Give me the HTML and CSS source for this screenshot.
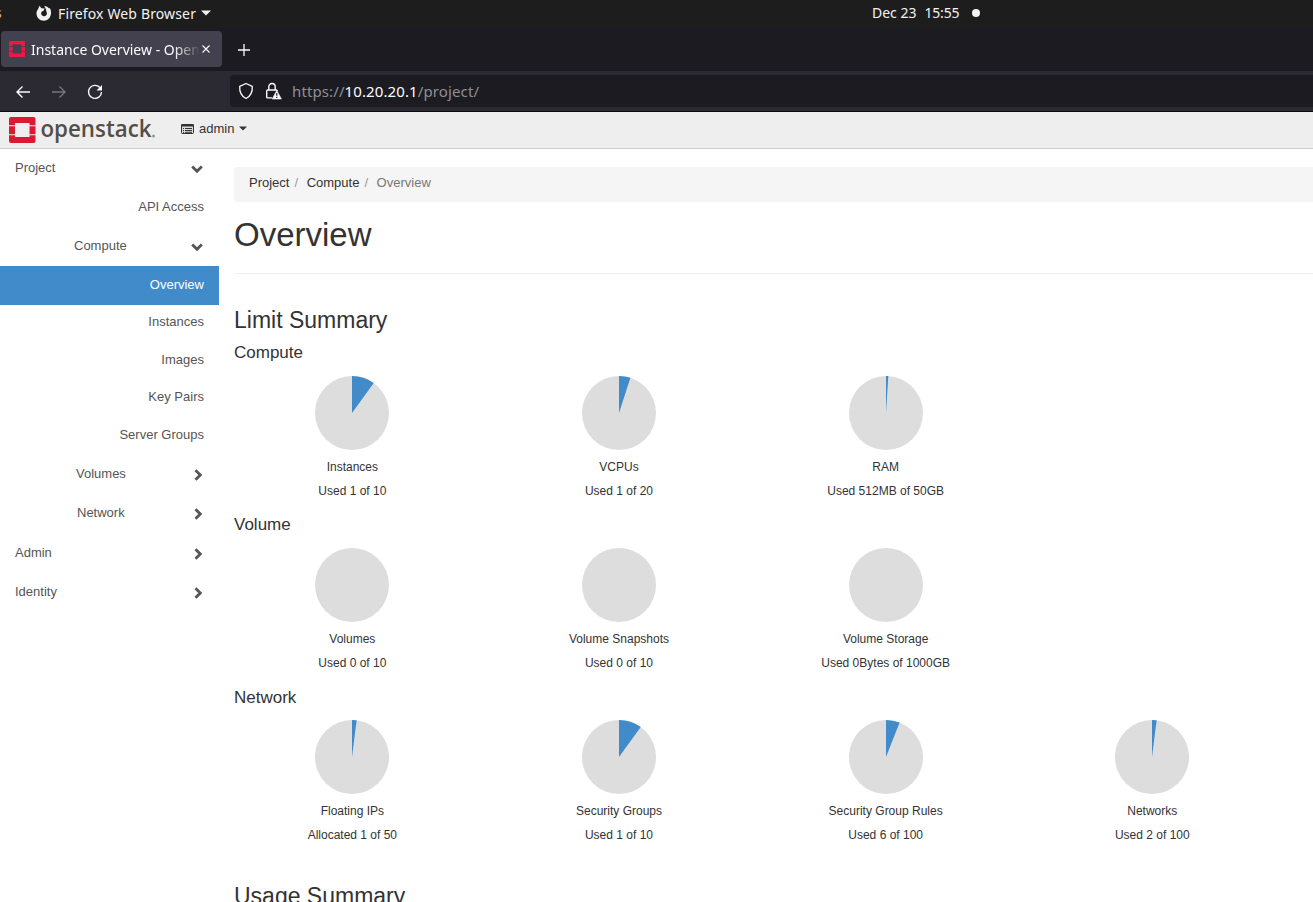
FILE: index.html
```html
<!DOCTYPE html>
<html lang="en">
<head>
<meta charset="utf-8">
<title>Instance Overview - OpenStack Dashboard</title>
<link rel="stylesheet" href="styles.css">
</head>
<body>
<div class="desktop-bar">
  <span class="activities">s</span>
  <div class="app-menu">
    <svg width="16" height="16" viewBox="0 0 16 16"><path d="M3.500.8 5.400 3.200 8.600 3.600 7.400 6 5.900 6.600A2.800 2.800 0 1 0 10.600 7.200L9.800 4 8.300.9C10.300 1 12 1.800 13 3.400L13.900 3C16.800 8.200 14.100 15.800 8 15.800 1.700 15.800-1.600 8.800 2 4.300Z" fill="#f2f2f2"/></svg>
    <span class="app-name">Firefox Web Browser</span>
    <svg class="caret" width="10" height="6" viewBox="0 0 10 6"><path d="M0 .5h10L5 5.500z" fill="#f2f2f2"/></svg>
  </div>
  <div class="clock"><span>Dec 23</span><span class="time">15:55</span><i class="dot"></i></div>
</div>
<div class="tab-strip">
  <div class="tab">
    <svg width="16" height="16" viewBox="0 0 16 16"><path fill="#ed1944" d="M1 0h14Q16 0 16 1V5.200h-3.500V3.500h-9V5.200H0V1Q0 0 1 0ZM0 5.900h3.500v4.200H0Zm12.500 0H16v4.200h-3.500ZM0 10.800h3.500v1.700h9v-1.700H16V15Q16 16 15 16H1Q0 16 0 15Z"/></svg>
    <span class="tab-title">Instance Overview - OpenStack</span>
    <svg class="close" width="8" height="8" viewBox="0 0 8 8"><path d="m.5.500 7 7m0-7-7 7" stroke="#fbfbfe" stroke-width="1.100"/></svg>
  </div>
  <svg class="new-tab" width="12" height="12" viewBox="0 0 12 12"><path d="M6 0v12M0 6h12" stroke="#fbfbfe" stroke-width="1.300"/></svg>
</div>
<div class="toolbar">
  <div class="nav-buttons">
    <svg width="16" height="16" viewBox="0 0 16 16"><path d="M15 8H2m5.500-5.500L2 8l5.500 5.500" fill="none" stroke="#fbfbfe" stroke-width="1.400"/></svg>
    <svg width="16" height="16" viewBox="0 0 16 16"><path d="M1 8h13M8.500 2.500 14 8l-5.500 5.500" fill="none" stroke="#77767e" stroke-width="1.300"/></svg>
    <svg width="16" height="16" viewBox="0 0 16 16"><path d="M12.800 3.500A6.500 6.500 0 1 0 14.500 8" fill="none" stroke="#fbfbfe" stroke-width="1.400"/><path d="M15 1v5.500H9.500Z" fill="#fbfbfe"/></svg>
  </div>
  <div class="url-bar">
    <svg width="16" height="18" viewBox="0 0 16 18"><path d="m8 1.500 6.300 2.800c.3 5-.9 9.600-6.300 12.200C2.600 13.900 1.400 9.300 1.700 4.300Z" fill="none" stroke="#fbfbfe" stroke-width="1.300" stroke-linejoin="round"/></svg>
    <svg class="lock" width="17" height="18" viewBox="0 0 17 18"><path d="M3.800 8V4.700a3.200 3.200 0 0 1 6.400 0V8M7 15.900H2.700Q1.700 15.900 1.700 14.900V9Q1.700 8 2.700 8h8.600q.9 0 .9 1" fill="none" stroke="#fbfbfe" stroke-width="1.400"/><path d="m11.800 8.400 4.600 8.600H7.200Z" fill="#fbfbfe" stroke="#fbfbfe" stroke-width=".6" stroke-linejoin="round"/><path d="M11.800 11v2.800m0 1v1.200" stroke="#1c1b22" stroke-width="1.200"/></svg>
    <span class="url">https://<b>10.20.20.1</b>/project/</span>
  </div>
</div>
<header class="navbar">
  <svg class="brand" width="148" height="36" viewBox="0 -2 148 36">
    <path fill="#da1a32" d="M2 3h22.500Q26.500 3 26.500 5v6.300H20.500V9H6v2.300H0V5Q0 3 2 3ZM0 12.300h6v8H0Zm20.500 0h6v8h-6ZM0 21.300h6V23h14.500v-1.700h6V27q0 2-2 2H2q-2 0-2-2Z"/>
    <text class="wordmark" x="31.500" y="23" textLength="111" lengthAdjust="spacingAndGlyphs">openstack</text>
    <circle cx="144.500" cy="22" r="1.500" fill="#999"/>
  </svg>
  <div class="domain">
    <svg width="13" height="10" viewBox="0 0 13 10"><rect x=".5" y=".5" width="12" height="9" rx=".8" fill="#ddd" stroke="#333"/><path d="M0 1.500h13" stroke="#333" stroke-width="2"/><path d="M2 4.500h1m1 0h7M2 6.500h1m1 0h7M2 8.300h1m1 0h7" stroke="#333" stroke-width="1"/></svg>
    <span>admin</span>
    <svg width="8" height="5" viewBox="0 0 8 5"><path d="M0 .5h8l-4 4z" fill="#333"/></svg>
  </div>
</header>
<div class="page">
  <nav class="sidebar">
    <a class="row top">Project<svg class="down" width="12" height="9" viewBox="0 0 12 9"><path d="m1.200 1.500 4.800 4.800 4.800-4.800" class="chev"/></svg></a>
    <a class="row leaf">API Access</a>
    <a class="row group compute">Compute<svg class="down" width="12" height="9" viewBox="0 0 12 9"><path d="m1.200 1.500 4.800 4.800 4.800-4.800" class="chev"/></svg></a>
    <a class="row leaf active">Overview</a>
    <a class="row leaf h36">Instances</a>
    <a class="row leaf images">Images</a>
    <a class="row leaf h36">Key Pairs</a>
    <a class="row leaf">Server Groups</a>
    <a class="row group volumes">Volumes<svg width="9" height="12" viewBox="0 0 9 12"><path d="M1.500 1.200 6.300 6l-4.800 4.800" class="chev"/></svg></a>
    <a class="row group network">Network<svg width="9" height="12" viewBox="0 0 9 12"><path d="M1.500 1.200 6.300 6l-4.800 4.800" class="chev"/></svg></a>
    <a class="row top admin">Admin<svg width="9" height="12" viewBox="0 0 9 12"><path d="M1.500 1.200 6.300 6l-4.800 4.800" class="chev"/></svg></a>
    <a class="row top identity">Identity<svg width="9" height="12" viewBox="0 0 9 12"><path d="M1.500 1.200 6.300 6l-4.800 4.800" class="chev"/></svg></a>
  </nav>
  <main class="content">
    <div class="breadcrumb"><span>Project</span><i>/</i><span>Compute</span><i>/</i><span class="current">Overview</span></div>
    <h1>Overview</h1>
    <h2>Limit Summary</h2>
    <section class="quota">
      <h3>Compute</h3>
      <div class="charts">
        <div class="chart"><svg class="pie" viewBox="0 0 74 74"><circle cx="37" cy="37" r="37"/><path d="M37 37V0A37 37 0 0 1 58.750 7.070Z"/></svg><p>Instances</p><p>Used 1 of 10</p></div>
        <div class="chart"><svg class="pie" viewBox="0 0 74 74"><circle cx="37" cy="37" r="37"/><path d="M37 37V0A37 37 0 0 1 48.430 1.810Z"/></svg><p>VCPUs</p><p>Used 1 of 20</p></div>
        <div class="chart"><svg class="pie" viewBox="0 0 74 74"><circle cx="37" cy="37" r="37"/><path d="M37 37V0A37 37 0 0 1 39.320 .07Z"/></svg><p>RAM</p><p>Used 512MB of 50GB</p></div>
      </div>
    </section>
    <section class="quota">
      <h3>Volume</h3>
      <div class="charts">
        <div class="chart"><svg class="pie" viewBox="0 0 74 74"><circle cx="37" cy="37" r="37"/></svg><p>Volumes</p><p>Used 0 of 10</p></div>
        <div class="chart"><svg class="pie" viewBox="0 0 74 74"><circle cx="37" cy="37" r="37"/></svg><p>Volume Snapshots</p><p>Used 0 of 10</p></div>
        <div class="chart"><svg class="pie" viewBox="0 0 74 74"><circle cx="37" cy="37" r="37"/></svg><p>Volume Storage</p><p>Used 0Bytes of 1000GB</p></div>
      </div>
    </section>
    <section class="quota">
      <h3>Network</h3>
      <div class="charts">
        <div class="chart"><svg class="pie" viewBox="0 0 74 74"><circle cx="37" cy="37" r="37"/><path d="M37 37V0A37 37 0 0 1 41.640 .29Z"/></svg><p>Floating IPs</p><p>Allocated 1 of 50</p></div>
        <div class="chart"><svg class="pie" viewBox="0 0 74 74"><circle cx="37" cy="37" r="37"/><path d="M37 37V0A37 37 0 0 1 58.750 7.070Z"/></svg><p>Security Groups</p><p>Used 1 of 10</p></div>
        <div class="chart"><svg class="pie" viewBox="0 0 74 74"><circle cx="37" cy="37" r="37"/><path d="M37 37V0A37 37 0 0 1 50.620 2.600Z"/></svg><p>Security Group Rules</p><p>Used 6 of 100</p></div>
        <div class="chart"><svg class="pie" viewBox="0 0 74 74"><circle cx="37" cy="37" r="37"/><path d="M37 37V0A37 37 0 0 1 41.640 .29Z"/></svg><p>Networks</p><p>Used 2 of 100</p></div>
      </div>
    </section>
    <h2 class="usage">Usage Summary</h2>
  </main>
</div>
</body>
</html>
```
FILE: styles.css
```css
* { box-sizing: border-box; }
html, body { height: 902px; overflow: hidden; }
body { margin: 0; background: #fff; color: #333; font: 13px/18px "Liberation Sans", Arial, sans-serif; }
svg { display: block; flex: none; }
h1, h2, h3, p { margin: 0; font-weight: 400; }

.desktop-bar, .tab-strip, .toolbar { display: flex; align-items: center; font-family: "Noto Sans", sans-serif; white-space: nowrap; }
.desktop-bar { height: 28px; background: #1d1d1d; color: #f2f2f2; font-size: 14px; padding-bottom: 2px; }
.activities { width: 36px; text-indent: -5px; color: #e0b080; }
.app-menu { display: flex; align-items: center; width: 836px; }
.app-name { margin: 1px 0 -1px 6px; width: 138px; letter-spacing: .14px; }
.caret { margin-left: 5px; }
.clock { display: flex; align-items: center; }
.time { margin-left: 8px; letter-spacing: -.2px; }
.dot { width: 8px; height: 8px; margin-left: 13px; border-radius: 50%; background: #f2f2f2; }

.tab-strip { height: 42px; background: #1c1b22; padding: 0 0 0 1px; }
.tab { display: flex; align-items: center; width: 221px; height: 36px; padding-left: 8px; border-radius: 4px; background: #42414d; }
.tab-title { width: 167px; margin: 1px 0 -1px 6px; overflow: hidden; color: #fbfbfe; font-size: 14px; -webkit-mask-image: linear-gradient(90deg, #000 143px, transparent 170px); mask-image: linear-gradient(90deg, #000 143px, transparent 170px); }
.close { margin-left: 4px; }
.new-tab { margin: 1px 0 0 16px; }

.toolbar { height: 42px; background: #2b2a33; border-top: 1px solid #1a1920; border-bottom: 1px solid #0c0c0d; }
.nav-buttons { display: flex; gap: 20px; width: 230px; padding: 1px 0 0 15px; }
.url-bar { display: flex; flex: 1; align-items: center; height: 32px; padding-left: 8px; border-radius: 4px 0 0 4px; background: #1c1b22; }
.lock { margin-left: 11px; }
.url { margin-left: 10px; color: #8f8e96; font-size: 15px; letter-spacing: .11px; }
.url b { color: #fbfbfe; font-weight: 400; }

.navbar { display: flex; align-items: center; height: 37px; padding-left: 9px; background: #eee; border-bottom: 1px solid #ccc; }
.brand { margin-top: -1px; }
.wordmark { fill: #544e49; font: 600 24px "Open Sans", sans-serif; }
.domain { display: flex; align-items: center; gap: 5px; margin: -3px 0 0 24px; }

.page { display: flex; }
.sidebar { width: 219px; flex: none; }
.row { display: flex; align-items: center; justify-content: space-between; height: 39px; padding: 0 15px 2px; color: #555; }
.leaf { justify-content: flex-end; }
.compute { padding-left: 74px; }
.volumes { padding-left: 76px; }
.network { padding-left: 77px; }
.active { background: #428bca; color: #fff; }
.h36 { height: 36px; }
.images { height: 39px; padding-bottom: 1px; }
.admin { height: 40px; padding-bottom: 1px; }
.row svg { margin: 3px 1px 0 0; }
.admin svg { margin-top: 2px; }
.chev { fill: none; stroke: #555; stroke-width: 2.800; }

.content { flex: 1; min-width: 0; padding: 18px 0 0 15px; }
.breadcrumb { display: flex; height: 35px; padding: 7px 15px; border-radius: 4px 0 0 4px; background: #f5f5f5; }
.breadcrumb i { width: 17.200px; padding-left: 5px; color: #999; font-style: normal; }
.breadcrumb .current { color: #777; }
h1 { height: 72px; padding-top: 15px; border-bottom: 1px solid #eee; font-size: 33px; line-height: 36px; }
h2 { height: 68px; padding-top: 33px; font-size: 23px; line-height: 26px; }
.quota { height: 172.300px; }
h3 { height: 33.700px; padding-top: 1px; font-size: 17px; line-height: 20px; }
.charts { display: grid; grid-template-columns: repeat(4, 266.670px); margin-left: -15px; }
.chart { text-align: center; font-size: 12px; }
.pie { width: 74px; height: 74px; margin: 0 auto 5px; }
.pie circle { fill: #ddd; }
.pie path { fill: #428bca; }
.chart p { height: 24px; line-height: 24px; }
.usage { padding-top: 24px; }
```
